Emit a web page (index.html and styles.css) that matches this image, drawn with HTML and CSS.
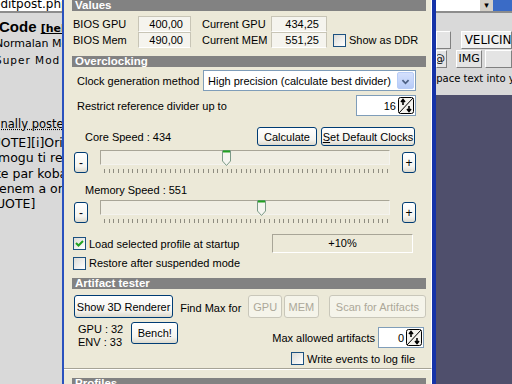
FILE: index.html
```html
<!DOCTYPE html>
<html lang="hr">
<head>
    <meta charset="UTF-8">
    <title>ATITool</title>
    <link rel="stylesheet" href="styles.css">
</head>
<body>
    <div class="desktop">
        <div class="browser browser-left">
            <div class="address"><span class="address-text">editpost.php</span></div>
            <div class="post-head">
                <div class="code-title">Code <span class="help">[help]</span></div>
                <div class="mode">Normalan Mod</div>
                <div class="mode spaced">Super Mod</div>
            </div>
            <div class="posted">Originally posted</div>
            <div class="quote">
                <div>[QUOTE][i]Originally</div>
                <div>Ne mogu ti reći</div>
                <div>Neke par kobasica</div>
                <div>Okrenem a onda</div>
                <div>[/QUOTE]</div>
            </div>
        </div>

        <div class="dialog">
            <div class="panel">
                <div class="section-head head-values">Values</div>
                <div class="values">
                    <span class="lbl">BIOS GPU</span>
                    <span class="readout">400,00</span>
                    <span class="lbl lbl-current">Current GPU</span>
                    <span class="readout">434,25</span>
                    <span></span>
                    <span class="lbl">BIOS Mem</span>
                    <span class="readout">490,00</span>
                    <span class="lbl lbl-current">Current MEM</span>
                    <span class="readout">551,25</span>
                    <label class="check check-ddr"><span class="box"></span>Show as DDR</label>
                </div>

                <div class="section-head head-oc">Overclocking</div>
                <div class="row row-clock">
                    <span class="lbl">Clock generation method</span>
                    <div class="select">
                        <span class="select-text">High precision (calculate best divider)</span>
                        <span class="select-arrow">
                            <svg viewBox="0 0 17 17" width="17" height="17"><path d="M5 7l3.5 3.5L12 7" fill="none" stroke="#4d6185" stroke-width="2"/></svg>
                        </span>
                    </div>
                </div>
                <div class="row row-restrict">
                    <span class="lbl">Restrict reference divider up to</span>
                    <div class="spin spin-divider">
                        <span class="spin-value">16</span>
                        <span class="spin-btn">
                            <svg viewBox="0 0 16 17" width="16" height="17"><rect x="0.5" y="0.5" width="15" height="16" rx="2" fill="#f4f3ee" stroke="#000"/><path d="M1 16L15 1" stroke="#000"/><path d="M5 8V3M3 5l2-2.5L7 5" fill="none" stroke="#000" stroke-width="1.6"/><path d="M11 9v5M9 12l2 2.5L13 12" fill="none" stroke="#000" stroke-width="1.6"/></svg>
                        </span>
                    </div>
                </div>
                <div class="row row-core">
                    <span class="lbl speed-lbl">Core Speed : 434</span>
                    <button class="btn btn-calc">Calculate</button>
                    <button class="btn btn-default"><u>S</u>et Default Clocks</button>
                </div>
                <div class="slider-row">
                    <button class="btn btn-step">-</button>
                    <div class="slider">
                        <div class="track"></div>
                        <span class="thumb" style="left: 122px">
                            <svg viewBox="0 0 9 16" width="9" height="16"><path d="M0.5 0.5H8.5V11L4.5 15.5L0.5 11Z" fill="#f5f5f0" stroke="#7c9a88"/><path d="M1 1.5H8" stroke="#21a121" stroke-width="2"/></svg>
                        </span>
                        <div class="ticks"></div>
                    </div>
                    <button class="btn btn-step">+</button>
                </div>
                <div class="speed-lbl mem-lbl">Memory Speed : 551</div>
                <div class="slider-row">
                    <button class="btn btn-step">-</button>
                    <div class="slider">
                        <div class="track"></div>
                        <span class="thumb" style="left: 157px">
                            <svg viewBox="0 0 9 16" width="9" height="16"><path d="M0.5 0.5H8.5V11L4.5 15.5L0.5 11Z" fill="#f5f5f0" stroke="#7c9a88"/><path d="M1 1.5H8" stroke="#21a121" stroke-width="2"/></svg>
                        </span>
                        <div class="ticks"></div>
                    </div>
                    <button class="btn btn-step">+</button>
                </div>
                <div class="row row-load">
                    <label class="check"><span class="box checked">
                        <svg viewBox="0 0 11 11" width="11" height="11"><path d="M2 5l2.5 2.5L9 3" fill="none" stroke="#21a121" stroke-width="2"/></svg>
                    </span>Load selected profile at startup</label>
                    <span class="percent">+10%</span>
                </div>
                <div class="row row-restore">
                    <label class="check"><span class="box"></span>Restore after suspended mode</label>
                </div>

                <div class="section-head head-art">Artifact tester</div>
                <div class="row row-art">
                    <button class="btn btn-render">Show 3D Renderer</button>
                    <span class="lbl find-lbl">Find Max for</span>
                    <button class="btn btn-off btn-gpu">GPU</button>
                    <button class="btn btn-off btn-mem">MEM</button>
                    <button class="btn btn-off btn-scan">Scan for Artifacts</button>
                </div>
                <div class="row row-bench">
                    <div class="temps">
                        <div>GPU : 32</div>
                        <div>ENV : 33</div>
                    </div>
                    <button class="btn btn-bench">Bench!</button>
                    <div class="art-opts">
                        <div class="row row-max">
                            <span class="lbl">Max allowed artifacts</span>
                            <div class="spin spin-art">
                                <span class="spin-value">0</span>
                                <span class="spin-btn">
                                    <svg viewBox="0 0 16 17" width="16" height="17"><rect x="0.5" y="0.5" width="15" height="16" rx="2" fill="#f4f3ee" stroke="#000"/><path d="M1 16L15 1" stroke="#000"/><path d="M5 8V3M3 5l2-2.5L7 5" fill="none" stroke="#000" stroke-width="1.6"/><path d="M11 9v5M9 12l2 2.5L13 12" fill="none" stroke="#000" stroke-width="1.6"/></svg>
                                </span>
                            </div>
                        </div>
                        <label class="check check-log"><span class="box"></span>Write events to log file</label>
                    </div>
                </div>
            </div>
            <div class="panel panel-profiles">
                <div class="section-head">Profiles</div>
            </div>
        </div>

        <div class="browser browser-right">
            <div class="address address-right">
                <span class="address-field"></span>
                <span class="address-drop">&#9662;</span>
                <span class="address-go"></span>
            </div>
            <div class="toolbar">
                <div class="tool-row">
                    <span class="tbtn tbtn-cut"></span>
                    <span class="tbtn tbtn-size">VELICINA</span>
                </div>
                <div class="tool-row">
                    <span class="tbtn tbtn-at">@</span>
                    <span class="tbtn tbtn-img">IMG</span>
                    <span class="tbtn tbtn-more"></span>
                </div>
                <div class="hint">space text into your</div>
            </div>
            <div class="shade"></div>
        </div>
    </div>
</body>
</html>
```

FILE: styles.css
```css
* {
    margin: 0;
    padding: 0;
    box-sizing: border-box;
}

body {
    width: 512px;
    height: 384px;
    overflow: hidden;
    background: #d9d9d9;
    font-family: 'Liberation Sans', Arial, sans-serif;
    font-size: 11px;
    color: #000;
}

.desktop {
    display: flex;
    height: 384px;
}

/* browser behind the dialog */
.browser {
    background: #d9d9d9;
    overflow: hidden;
    font-family: 'DejaVu Sans', Verdana, sans-serif;
}

.browser-left {
    width: 62px;
    flex: none;
}

.address {
    height: 13px;
    background: #fff;
    border-bottom: 2px solid #8c8c8c;
    font-size: 12px;
    line-height: 8px;
    white-space: nowrap;
    overflow: hidden;
}

.address-text {
    display: block;
    margin-left: -7px;
}

.post-head {
    margin-left: -3px;
    padding-top: 6px;
    white-space: nowrap;
}

.code-title {
    font-family: 'Liberation Sans', Arial, sans-serif;
    font-size: 15px;
    font-weight: bold;
    line-height: 15px;
    margin-left: 2px;
}

.help {
    font-family: 'DejaVu Sans', Verdana, sans-serif;
    font-size: 11px;
    text-decoration: underline;
}

.mode {
    font-size: 11px;
    line-height: 16px;
    margin-left: -2px;
}

.spaced {
    letter-spacing: 1px;
    margin-left: -2px;
    font-size: 10.5px;
}

.posted {
    margin-top: 50px;
    margin-left: -27px;
    font-size: 11.5px;
    line-height: 13px;
    white-space: nowrap;
    text-decoration: underline dotted;
}

.quote {
    margin-left: -23px;
    margin-top: 4px;
    font-size: 12.5px;
    line-height: 15.3px;
    white-space: nowrap;
}

/* dialog window */
.dialog {
    width: 374px;
    flex: none;
    background: #ece9d8;
    border-left: 2px solid #2a52be;
    border-right: 4px solid #1533a8;
    display: flex;
    flex-direction: column;
}

.panel {
    height: 369px;
    flex: none;
    padding: 0 5px 0 8px;
    border-right: 1px solid #fff;
    border-bottom: 1px solid #a6a396;
}

.panel-profiles {
    height: auto;
    flex: 1;
    padding-top: 8px;
    border-top: 1px solid #fff;
}

.section-head {
    height: 11px;
    background: #828282;
    color: #fff;
    font-weight: bold;
    font-size: 11.5px;
    line-height: 11px;
    padding-left: 3px;
}

.head-values {
    margin-top: -2px;
    height: 13px;
    line-height: 15px;
}

.head-oc {
    margin-top: 8px;
}

.head-art {
    margin-top: 7px;
}

.lbl {
    white-space: nowrap;
}

.values {
    display: grid;
    grid-template-columns: 65px 53px 80px 56px 1fr;
    grid-auto-rows: 16px;
    align-items: center;
    margin-top: 5px;
    padding-left: 1px;
}

.lbl-current {
    padding-left: 11px;
}

.readout {
    height: 16px;
    line-height: 15px;
    text-align: right;
    padding-right: 7px;
    background: #f5f4ee;
    border: 1px solid #c8c5b6;
    border-bottom-color: #fff;
}

.check {
    display: flex;
    align-items: center;
    gap: 3px;
    white-space: nowrap;
}

.check-ddr {
    padding-left: 6px;
}

.box {
    width: 13px;
    height: 13px;
    flex: none;
    border: 1px solid #1c5180;
    background: linear-gradient(135deg, #dcdcd7, #fff);
    display: flex;
    align-items: center;
    justify-content: center;
}

.row {
    display: flex;
    align-items: center;
}

.row-clock {
    margin-top: 3px;
    height: 21px;
    padding-left: 5px;
}

.select {
    margin-left: auto;
    margin-right: 10px;
    width: 213px;
    height: 21px;
    display: flex;
    align-items: center;
    background: #fff;
    border: 1px solid #7f9db9;
    padding: 1px;
}

.select-text {
    flex: 1;
    padding-left: 3px;
    white-space: nowrap;
}

.select-arrow {
    width: 17px;
    height: 17px;
    background: linear-gradient(#d5e1fd, #b7cbf7);
    border: 1px solid #b9cdf7;
    border-radius: 2px;
    display: flex;
}

.row-restrict {
    margin-top: 4px;
    height: 21px;
    padding-left: 5px;
}

.spin {
    height: 21px;
    display: flex;
    align-items: center;
    background: #fff;
    border: 1px solid #7f9db9;
    padding: 1px;
}

.spin-divider {
    margin-left: auto;
    margin-right: 10px;
    width: 60px;
}

.spin-value {
    flex: 1;
    text-align: right;
    padding-right: 2px;
}

.spin-btn {
    display: flex;
}

.row-core {
    margin-top: 11px;
    height: 19px;
}

.speed-lbl {
    padding-left: 13px;
}

.btn {
    font-family: 'Liberation Sans', Arial, sans-serif;
    font-size: 11px;
    color: #000;
    height: 19px;
    border: 1px solid #003c74;
    border-radius: 3px;
    background: linear-gradient(#fff, #f5f4ef 70%, #dcd9cd);
    padding: 0 4px;
    white-space: nowrap;
}

.btn-calc {
    margin-left: auto;
    width: 60px;
}

.btn-default {
    margin-left: 4px;
    margin-right: 11px;
    width: 94px;
    padding: 0;
}

.slider-row {
    display: flex;
    align-items: flex-start;
    margin-top: 4px;
    height: 25px;
    padding-left: 2px;
}

.btn-step {
    width: 14px;
    height: 21px;
    margin-top: 2px;
    padding: 0;
    font-size: 12px;
}

.btn-step:last-child {
    margin-left: 12px;
}

.slider {
    position: relative;
    margin-left: 12px;
    width: 290px;
    height: 25px;
}

.track {
    height: 15px;
    border: 1px solid #a8a597;
    border-right-color: #f4f3ee;
    border-bottom-color: #f4f3ee;
    background: #f0eee3;
}

.thumb {
    position: absolute;
    top: 0;
    display: flex;
}

.ticks {
    margin: 4px 2px 0 4px;
    height: 4px;
    background: repeating-linear-gradient(to right, #8e8c80 0 1px, transparent 1px 4.72px);
}

.mem-lbl {
    margin-top: 9px;
    line-height: 12px;
}

.row-load {
    margin-top: 9px;
    height: 19px;
    padding-left: 1px;
}

.percent {
    margin-left: auto;
    margin-right: 13px;
    width: 141px;
    height: 19px;
    line-height: 17px;
    text-align: center;
    border: 1px solid #fff;
    border-top-color: #a8a597;
    border-left-color: #a8a597;
}

.row-restore {
    margin-top: 2px;
    height: 16px;
    padding-left: 1px;
}

.row-art {
    margin-top: 6px;
    height: 23px;
    padding-left: 2px;
}

.btn-render {
    height: 23px;
    width: 100px;
    padding: 0;
}

.find-lbl {
    margin-left: 7px;
    padding-top: 2px;
}

.btn-off {
    height: 23px;
    border-color: #c9c7ba;
    color: #aca899;
    background: #f5f4ea;
    padding: 0;
}

.btn-gpu {
    margin-left: 7px;
    width: 34px;
}

.btn-mem {
    margin-left: 2px;
    width: 35px;
}

.btn-scan {
    margin-left: 10px;
    width: 98px;
}

.row-bench {
    align-items: flex-start;
    margin-top: 4px;
    padding-left: 6px;
}

.temps {
    line-height: 13px;
    padding-top: 1px;
}

.btn-bench {
    margin-left: 8px;
    width: 47px;
    height: 22px;
}

.art-opts {
    margin-left: auto;
    margin-right: 2px;
    display: flex;
    flex-direction: column;
    align-items: flex-end;
}

.row-max {
    margin-top: 5px;
    height: 21px;
}

.spin-art {
    margin-left: 3px;
    width: 46px;
}

.check-log {
    margin-top: 4px;
    margin-right: 9px;
}

/* right side of the browser */
.browser-right {
    flex: 1;
    display: flex;
    flex-direction: column;
}

.address-right {
    display: flex;
}

.address-field {
    width: 44px;
}

.address-drop {
    width: 13px;
    background: #d4d0c8;
    font-size: 9px;
    line-height: 11px;
    text-align: center;
}

.address-go {
    flex: 1;
    background: #3a6bc6;
}

.toolbar {
    padding-top: 18px;
    height: 82px;
    flex: none;
}

.tool-row {
    display: flex;
    height: 18px;
    margin-bottom: 1px;
}

.tbtn {
    height: 18px;
    background: #e4e4e4;
    border: 1px solid #fff;
    border-right-color: #808080;
    border-bottom-color: #808080;
    font-size: 11px;
    line-height: 16px;
    white-space: nowrap;
    overflow: hidden;
}

.tbtn-cut {
    width: 17px;
}

.tbtn-size {
    margin-left: 10px;
    width: 60px;
    padding-left: 3px;
    font-size: 12px;
    background: #f0f0f0;
}

.tbtn-at {
    width: 12px;
    text-indent: -3px;
}

.tbtn-img {
    margin-left: 9px;
    width: 30px;
    text-align: center;
}

.tbtn-more {
    margin-left: 3px;
    width: 30px;
}

.hint {
    margin-top: 5px;
    margin-left: -5px;
    font-size: 10px;
    white-space: nowrap;
}

.shade {
    flex: 1;
    background: #4f4f6c;
}
```
